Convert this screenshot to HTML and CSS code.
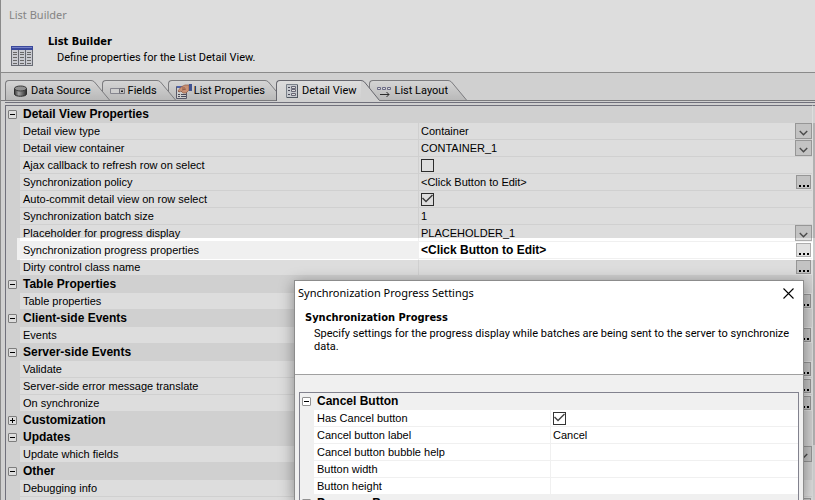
FILE: index.html
```html
<!DOCTYPE html>
<html lang="en">
<head>
<meta charset="utf-8">
<title>List Builder</title>
<link rel="stylesheet" href="styles.css">
</head>
<body>
<svg class="defs" aria-hidden="true">
  <symbol id="dots" viewBox="0 0 13 12"><path d="M2 9h2v2H2zM6 9h2v2H6zM10 9h2v2h-2z" fill="#000"/></symbol>
  <symbol id="chev" viewBox="0 0 15 15"><path d="M3.500 7.500l4 4 4-4" fill="none" stroke="#555" stroke-width="1.500"/></symbol>
  <symbol id="slope" viewBox="0 0 20 20"><path d="M0 .5Q2 .5 3.500 2L18.500 20H0z" fill="url(#face)"/><path d="M0 .5Q2 .5 3.500 2L18.500 20" fill="none" stroke="#8e8e92"/></symbol>
  <symbol id="slope-on" viewBox="0 0 20 21"><path d="M0 .5Q2 .5 3.500 2L18.500 20.500V21H0z" fill="#f0f0f0"/><path d="M0 .5Q2 .5 3.500 2L18.500 20.500" fill="none" stroke="#77777f"/></symbol>
  <linearGradient id="face" x1="0" y1="0" x2="0" y2="1"><stop offset="0" stop-color="#f6f6f6"/><stop offset="1" stop-color="#d6d6d6"/></linearGradient>
</svg>

<main class="window">
  <header class="masthead">
    <p class="caption">List Builder</p>
    <div class="intro">
      <svg class="table-icon" width="22" height="20" viewBox="0 0 22 20" aria-hidden="true">
        <path d="M0 0h22v20H0z" fill="#777b85"/><path d="M0 0h22v4H0z" fill="#4455b4"/><path d="M1 1h20v1H1z" fill="#8794e6"/>
        <path d="M1 4h6v15H1zM8 4h6v15H8zM15 4h6v15h-6z" fill="#e8eaf0"/>
        <path d="M2 6.500h4m3 0h4m3 0h4M2 8.500h4m3 0h4m3 0h4M2 11.500h4m3 0h4m3 0h4M2 14.500h4m3 0h4m3 0h4M2 17.500h4m3 0h4m3 0h4" stroke="#777"/>
      </svg>
      <div>
        <h1>List Builder</h1>
        <p class="desc">Define properties for the List Detail View.</p>
      </div>
    </div>
  </header>

  <nav class="tabs" aria-label="Sections">
    <button class="tab" type="button">
      <svg width="16" height="16" viewBox="0 0 16 16" aria-hidden="true"><defs><linearGradient id="metal"><stop offset="0" stop-color="#444"/><stop offset=".35" stop-color="#bbb"/><stop offset="1" stop-color="#333"/></linearGradient></defs><path d="M1.500 5.500v5.500c0 3 12 3 12 0V5.500z" fill="url(#metal)" stroke="#333"/><ellipse cx="7.500" cy="5.500" rx="6" ry="2.500" fill="#a8a8a8" stroke="#444"/></svg>
      <span>Data Source</span><svg class="slope" aria-hidden="true"><use href="#slope"/></svg>
    </button>
    <button class="tab" type="button">
      <svg width="16" height="16" viewBox="0 0 16 16" aria-hidden="true"><path d="M.5 5.500h14v5H.5z" fill="#eee" stroke="#9a9aa4"/><path d="M9.500 5.500h5v5h-5z" fill="#ddd" stroke="#85858f"/><path d="M11 9h2v-1h-2z" fill="#222"/><path d="M11.500 7.500h1" stroke="#222"/></svg>
      <span>Fields</span><svg class="slope" aria-hidden="true"><use href="#slope"/></svg>
    </button>
    <button class="tab" type="button">
      <svg width="16" height="16" viewBox="0 0 16 16" aria-hidden="true"><path d="M.5 3.500h10v12H.5z" fill="#eee" stroke="#667"/><path d="M1 3h9v2H1z" fill="#5b74c8"/><path d="M2 8.500h2m1 0h5M2 11.500h2m1 0h5M2 13.500h2m1 0h5" stroke="#556"/><path d="M2 8l3-4 4-2h4v5l-3 3H7L5 8 3 9z" fill="#e8a888" stroke="#a86a50" stroke-width=".7"/><path d="M6 7l4-1M6 5h3" stroke="#a86a50"/><path d="M13 1h3v7h-3z" fill="#4a60a8"/></svg>
      <span>List Properties</span><svg class="slope" aria-hidden="true"><use href="#slope"/></svg>
    </button>
    <button class="tab tab-on" type="button" aria-current="page">
      <svg width="14" height="16" viewBox="0 0 14 16" aria-hidden="true"><path d="M.5 1.500h11v13H.5z" fill="#e6e9ef" stroke="#8c949f"/><path d="M11.500 2v13M1 14.500h11" stroke="#5d6570"/><path d="M2 4.500h2M2 7.500h2M2 11.500h2" stroke="#556"/><path d="M5.500 3.500h4v2h-4zM5.500 6.500h4v2h-4zM5.500 10.500h4v2h-4z" fill="#fff" stroke="#778"/></svg>
      <span>Detail View</span><svg class="slope" aria-hidden="true"><use href="#slope-on"/></svg>
    </button>
    <button class="tab" type="button">
      <svg width="16" height="16" viewBox="0 0 16 16" aria-hidden="true"><path d="M.5 4.500h3v2h-3zM5.500 4.500h3v2h-3zM10.500 4.500h3v2h-3z" fill="#fff" stroke="#7b7b9a"/><path d="M3 11.500h9M9.500 9l2.500 2.500L9.500 14" fill="none" stroke="#333"/></svg>
      <span>List Layout</span><svg class="slope" aria-hidden="true"><use href="#slope"/></svg>
    </button>
  </nav>

  <section class="pane">
    <div class="pane-inner">
    <table class="grid">
      <colgroup><col class="c-gutter"><col class="c-label"><col></colgroup>
      <tbody>
      <tr class="group"><td><button class="tog" type="button" aria-label="Collapse Detail View Properties"></button></td><th colspan="2">Detail View Properties</th></tr>
      <tr><td></td><td><label for="f1">Detail view type</label></td><td><div class="cell"><select id="f1"><option>Container</option></select><svg class="drop" aria-hidden="true"><use href="#chev"/></svg></div></td></tr>
      <tr><td></td><td><label for="f2">Detail view container</label></td><td><div class="cell"><select id="f2"><option>CONTAINER_1</option></select><svg class="drop" aria-hidden="true"><use href="#chev"/></svg></div></td></tr>
      <tr><td></td><td><label for="f3">Ajax callback to refresh row on select</label></td><td><div class="cell"><input type="checkbox" id="f3"></div></td></tr>
      <tr><td></td><td>Synchronization policy</td><td><div class="cell"><span>&lt;Click Button to Edit&gt;</span><button class="more" type="button" aria-label="Edit"><svg><use href="#dots"/></svg></button></div></td></tr>
      <tr><td></td><td><label for="f5">Auto-commit detail view on row select</label></td><td><div class="cell"><input type="checkbox" id="f5" checked></div></td></tr>
      <tr><td></td><td><label for="f6">Synchronization batch size</label></td><td><div class="cell"><input type="text" id="f6" value="1"></div></td></tr>
      <tr><td></td><td><label for="f7">Placeholder for progress display</label></td><td><div class="cell"><select id="f7"><option>PLACEHOLDER_1</option></select><svg class="drop" aria-hidden="true"><use href="#chev"/></svg></div></td></tr>
      <tr class="current"><td></td><td>Synchronization progress properties</td><td><div class="cell"><span>&lt;Click Button to Edit&gt;</span><button class="more" type="button" aria-label="Edit"><svg><use href="#dots"/></svg></button></div></td></tr>
      <tr><td></td><td>Dirty control class name</td><td><div class="cell"><button class="more" type="button" aria-label="Edit"><svg><use href="#dots"/></svg></button></div></td></tr>
      <tr class="group"><td><button class="tog" type="button" aria-label="Collapse Table Properties"></button></td><th colspan="2">Table Properties</th></tr>
      <tr><td></td><td>Table properties</td><td><div class="cell"><button class="more" type="button" aria-label="Edit"><svg><use href="#dots"/></svg></button></div></td></tr>
      <tr class="group"><td><button class="tog" type="button" aria-label="Collapse Client-side Events"></button></td><th colspan="2">Client-side Events</th></tr>
      <tr><td></td><td>Events</td><td><div class="cell"><button class="more" type="button" aria-label="Edit"><svg><use href="#dots"/></svg></button></div></td></tr>
      <tr class="group"><td><button class="tog" type="button" aria-label="Collapse Server-side Events"></button></td><th colspan="2">Server-side Events</th></tr>
      <tr><td></td><td>Validate</td><td><div class="cell"><button class="more" type="button" aria-label="Edit"><svg><use href="#dots"/></svg></button></div></td></tr>
      <tr><td></td><td>Server-side error message translate</td><td><div class="cell"><button class="more" type="button" aria-label="Edit"><svg><use href="#dots"/></svg></button></div></td></tr>
      <tr><td></td><td>On synchronize</td><td><div class="cell"><button class="more" type="button" aria-label="Edit"><svg><use href="#dots"/></svg></button></div></td></tr>
      <tr class="group"><td><button class="tog tog-plus" type="button" aria-label="Expand Customization"></button></td><th colspan="2">Customization</th></tr>
      <tr class="group"><td><button class="tog" type="button" aria-label="Collapse Updates"></button></td><th colspan="2">Updates</th></tr>
      <tr><td></td><td><label for="f20">Update which fields</label></td><td><div class="cell"><select id="f20"><option></option></select><svg class="drop" aria-hidden="true"><use href="#chev"/></svg></div></td></tr>
      <tr class="group"><td><button class="tog" type="button" aria-label="Collapse Other"></button></td><th colspan="2">Other</th></tr>
      <tr><td></td><td>Debugging info</td><td></td></tr>
      <tr><td></td><td></td><td><div class="cell"><button class="more" type="button" aria-label="Edit"><svg><use href="#dots"/></svg></button></div></td></tr>
      </tbody>
    </table>
    <div class="scroll"><div class="thumb"></div></div>
    </div>
  </section>
</main>

<div class="spotlight"></div>

<section class="dialog" role="dialog" aria-labelledby="dlg-title">
  <header class="dlg-head">
    <div class="dlg-bar">
      <h2 id="dlg-title">Synchronization Progress Settings</h2>
      <button class="close" type="button" aria-label="Close"><svg width="11" height="11" viewBox="0 0 11 11"><path d="M.5.5l10 10M10.500.5l-10 10" stroke="#000" stroke-width="1.100"/></svg></button>
    </div>
    <div class="dlg-intro">
      <h3>Synchronization Progress</h3>
      <p>Specify settings for the progress display while batches are being sent to the server to synchronize data.</p>
    </div>
  </header>
  <div class="dlg-body">
    <table class="grid">
      <colgroup><col class="c-gutter"><col class="c-label"><col></colgroup>
      <tbody>
      <tr class="group"><td><button class="tog" type="button" aria-label="Collapse Cancel Button"></button></td><th colspan="2">Cancel Button</th></tr>
      <tr><td></td><td><label for="d1">Has Cancel button</label></td><td><div class="cell"><input type="checkbox" id="d1" checked></div></td></tr>
      <tr><td></td><td><label for="d2">Cancel button label</label></td><td><div class="cell"><input type="text" id="d2" value="Cancel"></div></td></tr>
      <tr><td></td><td><label for="d3">Cancel button bubble help</label></td><td><div class="cell"><input type="text" id="d3"></div></td></tr>
      <tr><td></td><td><label for="d4">Button width</label></td><td><div class="cell"><input type="text" id="d4"></div></td></tr>
      <tr><td></td><td><label for="d5">Button height</label></td><td><div class="cell"><input type="text" id="d5"></div></td></tr>
      <tr class="group"><td><button class="tog" type="button" aria-label="Collapse Progress Bar"></button></td><th colspan="2">Progress Bar</th></tr>
      </tbody>
    </table>
  </div>
</section>
</body>
</html>
```
FILE: styles.css
```css
* { box-sizing: border-box; }
html, body { margin: 0; height: 100%; }
body {
  position: relative;
  overflow: hidden;
  font: 11px/14px Roboto, sans-serif;
  color: #000;
  background: #f0f0f0;
}
h1, h2, h3, p { margin: 0; }
h1, h3 { font: bold 11px/14px "DejaVu Sans Condensed", sans-serif; }
button, input, select { font: inherit; color: inherit; padding: 0; margin: 0; border: 0; background: none; }
.defs { position: absolute; width: 0; height: 0; }

.window {
  height: 100%;
  display: flex;
  flex-direction: column;
  border-left: 1px solid #a0a0a0;
}
.masthead { height: 73px; flex: none; background: #fff; border-bottom: 1px solid #a0a0a0; }
.caption { padding: 7px 0 0 8px; font: 11px/16px "Noto Sans", sans-serif; color: #999; }
.intro { display: flex; gap: 15px; padding: 12px 0 0 10px; }
.table-icon { margin-top: 11px; }
.desc { padding: 2px 0 0 9px; }

.tabs { display: flex; flex: none; height: 28px; padding: 7px 0 0 4px; border-bottom: 1px solid #8e8e92; }
.tab {
  display: flex;
  align-items: center;
  gap: 2px;
  position: relative;
  height: 20px;
  margin-right: 11px;
  padding-left: 7px;
  border: 1px solid #8e8e92;
  border-width: 1px 0 0 1px;
  border-radius: 4px 0 0 0;
  background: linear-gradient(#f6f6f6, #d6d6d6);
  white-space: nowrap;
}
.tab:nth-child(1) { z-index: 3; }
.tab:nth-child(2) { z-index: 2; }
.tab:nth-child(3) { z-index: 1; }
.tab svg { flex: none; }
.tab .slope { position: absolute; left: 100%; top: -1px; width: 20px; height: 20px; }
.tab-on, .tab-on .slope { height: 21px; }
.tab.tab-on { z-index: 4; padding: 0 4px 0 9px; margin-right: 8px; background: linear-gradient(#fff, #f0f0f0); border-color: #77777f; }

.pane { flex: 1; min-height: 0; margin-left: 4px; padding-top: 1px; }
.pane-inner {
  height: 100%;
  display: flex;
  border-top: 1px solid #82828e;
  padding-top: 2px;
}
.pane .grid { flex: 1; align-self: flex-start; border-top: 1px solid #82828e; border-left: 1px solid #82828e; }
.scroll { width: 3px; border-top: 1px solid #82828e; border-left: 1px solid #fff; }
.thumb { margin-top: 17px; height: 322px; background: #cdcdcd; }

.grid {
  width: 100%;
  table-layout: fixed;
  border-spacing: 0;
  font: 11px/16px "Liberation Sans", sans-serif;
}
.c-gutter { width: 14px; }
.pane .c-label { width: 398px; }
.grid td, .grid th { height: 17px; padding: 0; border-bottom: 1px solid #f0f0f0; background: #fff; white-space: nowrap; }
.grid td:first-child, .grid .group > * { background: #f0f0f0; }
.grid td:nth-child(2) { padding-left: 3px; }
.grid td:nth-child(3) { padding-left: 2px; border-left: 1px solid #f0f0f0; }
.grid th { padding-left: 3px; text-align: left; font-size: 12px; }
.grid .current td { background: #f0f0f0; }
.grid .current td:nth-child(3) { background: #fff; font-weight: bold; font-size: 12px; }
.grid label { display: block; }

.cell { display: flex; align-items: center; height: 16px; }
.cell select, .cell input[type="text"] { flex: 1; min-width: 0; height: 16px; appearance: none; outline: none; }
.drop { flex: none; width: 17px; height: 16px; border: 1px solid #adadad; background: #e1e1e1; }
.more { flex: none; width: 15px; height: 14px; margin-left: auto; margin-right: 1px; border: 1px solid #adadad; background: #e1e1e1; }
.more svg { display: block; width: 13px; height: 12px; }
.cell input[type="checkbox"] { appearance: none; width: 13px; height: 13px; border: 1px solid #333; background: #fff; }
.cell input[type="checkbox"]:checked::before {
  content: "";
  display: block;
  width: 11px;
  height: 11px;
  background: #444;
  clip-path: polygon(0 5px, 1px 4px, 4px 7px, 10px 1px, 11px 2px, 4px 9px);
}
.tog {
  display: block;
  width: 9px;
  height: 9px;
  margin-left: 2px;
  border: 1px solid #919191;
  border-radius: 1px;
  background: linear-gradient(#000, #000) center / 5px 1px no-repeat #fff;
}
.tog-plus {
  background: linear-gradient(#000, #000) center / 5px 1px no-repeat, linear-gradient(#000, #000) center / 1px 5px no-repeat #fff;
}

/* Dims everything but the band around the current row. */
.spotlight {
  position: absolute;
  z-index: 5;
  left: 17px;
  right: 0;
  top: 238px;
  height: 22px;
  box-shadow: 0 0 0 2000px rgba(0, 0, 0, .133);
  pointer-events: none;
}

.dialog {
  position: absolute;
  z-index: 6;
  left: 294px;
  right: 11px;
  top: 280px;
  bottom: 0;
  display: flex;
  flex-direction: column;
  overflow: hidden;
  border: 1px solid #8c8c8c;
  border-bottom: 0;
  background: #f0f0f0;
  box-shadow: 0 3px 14px rgba(0, 0, 0, .4);
}
.dlg-head { flex: none; height: 94px; background: #fff; border-bottom: 1px solid #a0a0a0; }
.dlg-bar { display: flex; justify-content: space-between; align-items: center; height: 24px; padding: 0 9px 0 3px; }
.dlg-bar h2 { font: 11px/16px "Noto Sans", sans-serif; }
.close svg { display: block; }
.dlg-intro { padding: 6px 10px 0 10px; }
.dlg-intro p { padding: 2px 0 0 9px; line-height: 13px; }
.dlg-body { flex: none; margin: 17px 4px 0; border: 1px solid #82828e; border-bottom: 0; }
.dialog .c-label { width: 236px; }
```
